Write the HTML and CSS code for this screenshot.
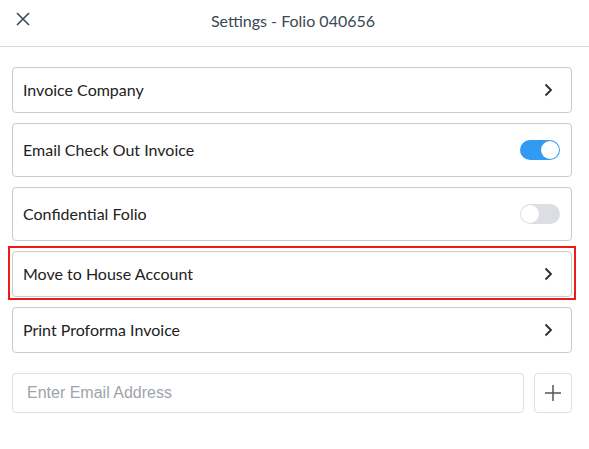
FILE: index.html
```html
<!DOCTYPE html>
<html>
<head>
<meta charset="utf-8">
<link rel="stylesheet" href="styles.css">
</head>
<body>
<header class="header">
  <button class="close" aria-label="Close">
    <svg width="14" height="14" viewBox="0 0 14 14"><path d="M1 1L13 13M13 1L1 13" stroke="#3b4856" stroke-width="1.6" fill="none"/></svg>
  </button>
  <div class="title">Settings - Folio 040656</div>
</header>
<main class="content">
  <div class="row link">
    <span class="label">Invoice Company</span>
    <svg class="chev" width="9" height="14" viewBox="0 0 9 14"><path d="M1.5 1.5L7 7L1.5 12.5" stroke="#2b2b2b" stroke-width="1.8" fill="none"/></svg>
  </div>
  <div class="row tall">
    <span class="label">Email Check Out Invoice</span>
    <span class="toggle on"><span class="knob"></span></span>
  </div>
  <div class="row tall">
    <span class="label">Confidential Folio</span>
    <span class="toggle"><span class="knob"></span></span>
  </div>
  <div class="row link highlighted">
    <span class="label">Move to House Account</span>
    <svg class="chev" width="9" height="14" viewBox="0 0 9 14"><path d="M1.5 1.5L7 7L1.5 12.5" stroke="#2b2b2b" stroke-width="1.8" fill="none"/></svg>
  </div>
  <div class="row link">
    <span class="label">Print Proforma Invoice</span>
    <svg class="chev" width="9" height="14" viewBox="0 0 9 14"><path d="M1.5 1.5L7 7L1.5 12.5" stroke="#2b2b2b" stroke-width="1.8" fill="none"/></svg>
  </div>
  <div class="email">
    <input class="email-input" type="text" placeholder="Enter Email Address">
    <button class="add" aria-label="Add">
      <svg width="16" height="16" viewBox="0 0 16 16"><path d="M8 0V16M0 8H16" stroke="#555" stroke-width="1.5" fill="none"/></svg>
    </button>
  </div>
</main>
</body>
</html>
```
FILE: styles.css
```css
* { box-sizing: border-box; }
html, body { margin: 0; padding: 0; background: #fff; }
body { font-family: Lato, "Noto Sans", sans-serif; color: #222; }

.header {
  position: relative;
  height: 47px;
  border-bottom: 1px solid #d3d8dc;
  display: flex;
  align-items: center;
  justify-content: center;
}
.close {
  position: absolute;
  left: 16px;
  top: 12px;
  width: 14px;
  height: 14px;
  padding: 0;
  border: 0;
  background: none;
  display: flex;
}
.title {
  font-size: 16px;
  color: #3b4856;
  margin-top: -6px;
  margin-left: -3px;
}

.content {
  padding: 20px 17px 0 12px;
  display: flex;
  flex-direction: column;
  gap: 10px;
}
.row {
  position: relative;
  display: flex;
  align-items: center;
  justify-content: space-between;
  border: 1px solid #cbcbcb;
  border-radius: 4px;
  padding: 0 11px 0 10px;
  height: 46px;
}
.row.tall { height: 54px; }
.label { font-size: 16px; color: #222; margin-top: -1px; }
.chev { margin-right: 7px; }
.highlighted::after {
  content: "";
  position: absolute;
  left: -5px;
  right: -5px;
  top: -6px;
  bottom: -4px;
  border: 2px solid #f01a1a;
  pointer-events: none;
}

.toggle {
  width: 40px;
  height: 20px;
  border-radius: 10px;
  background: #dcdee3;
  display: flex;
  align-items: center;
  padding: 1px;
}
.toggle.on { background: #339af3; justify-content: flex-end; }
.knob {
  width: 18px;
  height: 18px;
  border-radius: 50%;
  background: #fff;
}

.email {
  display: flex;
  gap: 10px;
  margin-top: 10px;
}
.email-input {
  flex: 1;
  height: 40px;
  border: 1px solid #dcdfe4;
  border-radius: 4px;
  padding: 0 14px;
  font-family: "Liberation Sans", Arial, sans-serif;
  font-size: 16px;
  color: #222;
  outline: none;
}
.email-input::placeholder { color: #9ea3a9; }
.add {
  width: 38px;
  height: 40px;
  border: 1px solid #dcdfe4;
  border-radius: 4px;
  background: #fff;
  padding: 0;
  display: flex;
  align-items: center;
  justify-content: center;
}
```
